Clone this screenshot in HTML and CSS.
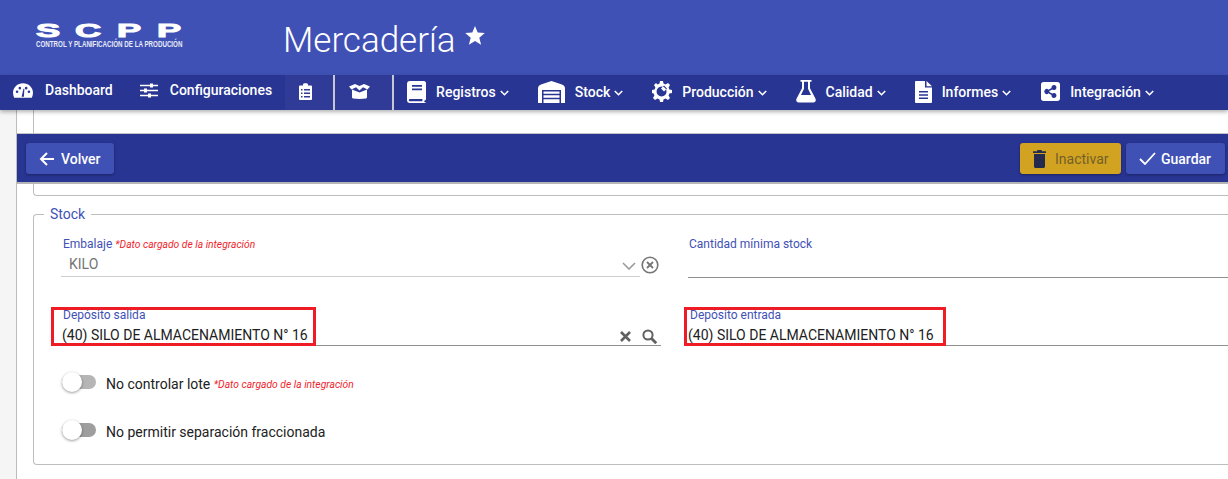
FILE: index.html
```html
<!DOCTYPE html>
<html lang="es">
<head>
<meta charset="utf-8">
<title>Mercadería</title>
<link rel="stylesheet" href="styles.css">
</head>
<body>
<header class="top">
  <div class="logo">
    <div class="logo-mark"><span>S</span><span>C</span><span>P</span><span>P</span></div>
    <div class="logo-sub">CONTROL Y PLANIFICACIÓN DE LA PRODUCIÓN</div>
  </div>
  <h1 class="title">Mercadería</h1>
  <svg class="star" width="20" height="19" viewBox="0 0 20 19"><path fill="#fff" d="M10 0l2.700 6.600 7.100.5-5.500 4.600 1.800 7L10 14.900l-6.100 3.800 1.800-7L.2 7.100l7.100-.5z"/></svg>
</header>
<nav class="nav">
  <a class="item dash"><svg class="i" width="20" height="15" viewBox="0 0 22 16"><path fill="#fff" fill-rule="evenodd" d="M11 0C5 0 0 4.500 0 10.500c0 2 .5 3.800 1.300 5.500h19.400c.8-1.700 1.300-3.500 1.300-5.500C22 4.500 17 0 11 0zM9.500 15l2-9h1l-.5 9zM4.500 8a1.400 1.400 0 1 1 0 2.800 1.400 1.400 0 0 1 0-2.800zm3-4a1.400 1.400 0 1 1 0 2.800 1.400 1.400 0 0 1 0-2.800zm7 0a1.400 1.400 0 1 1 0 2.800 1.400 1.400 0 0 1 0-2.800zm3 4a1.400 1.400 0 1 1 0 2.800 1.400 1.400 0 0 1 0-2.800z"/></svg>Dashboard</a>
  <a class="item conf"><svg class="i" width="18" height="15" viewBox="0 0 18 15"><path fill="none" stroke="#fff" stroke-width="1.700" d="M0 2.500h18M0 7.500h18M0 12.500h18"/><path fill="#fff" d="M10 .5h3v4h-3zM4 5.500h3v4H4zM8 10.500h3v4H8z"/></svg>Configuraciones</a>
  <a class="tab first"><svg width="13" height="17" viewBox="0 0 13 17"><path fill="#fff" fill-rule="evenodd" d="M1 2.500h3V1.500C4 .8 5 .3 6.500.3S9 .8 9 1.500v1h3c.5 0 1 .5 1 1V16c0 .5-.5 1-1 1H1c-.5 0-1-.5-1-1V3.500c0-.5.5-1 1-1zM2 6v1.500h1.500V6zm3 0v1.500h6V6zM2 9.500V11h1.500V9.500zm3 0V11h6V9.500zM2 13v1.500h1.500V13zm3 0v1.500h6V13z"/></svg></a>
  <a class="tab second"><svg width="21" height="15" viewBox="0 0 21 15"><path fill="#fff" d="M3 5.500l7.500 3 7.500-3V13c0 .8-.5 1.200-1 1.400L10.500 15l-6.500-.6c-.6-.2-1-.6-1-1.400zM0 2.500L6 0l4.500 2L15 0l6 2.500-2.500 3L14 3.300l-3.500 3.200L7 3.300 2.500 5.500z"/></svg></a>
  <a class="item reg"><svg class="i" width="19" height="22" viewBox="0 0 19 22"><path fill="#fff" fill-rule="evenodd" d="M3 0h14c1 0 2 1 2 2v16c0 .8-.6 1.400-1.500 1.500-.3.600-.3 1.200 0 1.800.8 0 1.500.2 1.500.7H3c-2 0-3-1.200-3-3V3c0-2 1-3 3-3zM5 4v1.800h10V4zm0 3.500v1.800h10V7.500zM3.300 18c-1 0-1.500.5-1.500 1.200s.5 1.100 1.500 1.100H15.500c-.2-.8-.2-1.500 0-2.300z"/></svg>Registros<svg class="chev" width="9" height="6" viewBox="0 0 9 6"><path fill="none" stroke="#fff" stroke-width="1.600" d="M.8 1l3.700 3.700L8.200 1"/></svg></a>
  <a class="item stk"><svg class="i" width="27" height="22" viewBox="0 0 27 22"><path fill="#fff" fill-rule="evenodd" d="M13.500 0L24 3.500c2 .8 3 2 3 4V22h-4V9H4v13H0V7.500c0-2 1-3.200 3-4zM5.500 10.500h16v2.300h-16zm0 3.800h16v2.400h-16zm0 4h16V22h-16z"/></svg>Stock<svg class="chev" width="9" height="6" viewBox="0 0 9 6"><path fill="none" stroke="#fff" stroke-width="1.600" d="M.8 1l3.700 3.700L8.200 1"/></svg></a>
  <a class="item prod"><svg class="i" width="20" height="21" viewBox="0 0 20 21"><path fill="#fff" fill-rule="evenodd" d="M8 0h3l.5 2.600 2 .8L16 2l2 2-1.400 2.500.8 2L20 9v3l-2.600.5-.8 2L18 17l-2 2-2.500-1.400-2 .8L11 21H8l-.5-2.600-2-.8L3 19l-2-2 1.400-2.500-.8-2L0 12V9l2.600-.5.8-2L2 4l2-2 1.500 1.400 2-.8zM9.500 5.500a5 5 0 1 0 .1 10 5 5 0 0 0-.1-10zM12 4.500l3 3-3 3-3-3z"/></svg>Producción<svg class="chev" width="9" height="6" viewBox="0 0 9 6"><path fill="none" stroke="#fff" stroke-width="1.600" d="M.8 1l3.700 3.700L8.200 1"/></svg></a>
  <a class="item cal"><svg class="i" width="20" height="23" viewBox="0 0 20 23"><path fill="#fff" fill-rule="evenodd" d="M4.500 0h11v1.800H14v6.500l5.500 10.500c.8 1.800-.2 3.700-2.200 3.700H2.700C.7 22.500-.3 20.600.5 18.800L6 8.300V1.800H4.500zM8 1.800v7L5 15h10l-3-6.200v-7z"/></svg>Calidad<svg class="chev" width="9" height="6" viewBox="0 0 9 6"><path fill="none" stroke="#fff" stroke-width="1.600" d="M.8 1l3.700 3.700L8.200 1"/></svg></a>
  <a class="item inf"><svg class="i" width="17" height="22" viewBox="0 0 17 22"><path fill="#fff" fill-rule="evenodd" d="M1 0h9v6.500h7V21c0 .5-.5 1-1 1H1c-.5 0-1-.5-1-1V1c0-.5.5-1 1-1zm10.500 0L17 5.200h-5.500zM4 10v1.500h9V10zm0 3.200v1.500h9v-1.500zm0 3.200v1.500h9v-1.500z"/></svg>Informes<svg class="chev" width="9" height="6" viewBox="0 0 9 6"><path fill="none" stroke="#fff" stroke-width="1.600" d="M.8 1l3.700 3.700L8.200 1"/></svg></a>
  <a class="item int"><svg class="i" width="19" height="19" viewBox="0 0 19 19"><path fill="#fff" fill-rule="evenodd" d="M2.500 0h14C18 0 19 1 19 2.500v14c0 1.500-1 2.500-2.500 2.500h-14C1 19 0 18 0 16.500v-14C0 1 1 0 2.500 0zM13 3a2.500 2.500 0 0 0-2.500 3l-3 1.700a2.500 2.500 0 1 0 0 3.600l3 1.700a2.500 2.500 0 1 0 .8-1.400l-3-1.700a2.500 2.500 0 0 0 0-.8l3-1.700A2.500 2.500 0 1 0 13 3z"/></svg>Integración<svg class="chev" width="9" height="6" viewBox="0 0 9 6"><path fill="none" stroke="#fff" stroke-width="1.600" d="M.8 1l3.700 3.700L8.200 1"/></svg></a>
</nav>
<main class="page">
  <div class="sheet">
    <div class="spacer"></div>
    <div class="toolbar">
      <button class="btn back"><svg width="16" height="14" viewBox="0 0 16 14"><path fill="none" stroke="#fff" stroke-width="2" d="M15 7H2M8 1L2 7l6 6"/></svg>Volver</button>
      <div class="actions">
        <button class="btn inactive"><svg width="13" height="18" viewBox="0 0 13 18"><path fill="#232a4d" d="M4.500 0h4l.5 1.300h4V3H0V1.300h4zM1 4h11v12.500c0 .8-.7 1.500-1.500 1.500h-8C1.700 18 1 17.300 1 16.500z"/></svg>Inactivar</button>
        <button class="btn save"><svg width="17" height="13" viewBox="0 0 17 13"><path fill="none" stroke="#fff" stroke-width="1.800" d="M1 7l5 5L16 1"/></svg>Guardar</button>
      </div>
    </div>
    <div class="prev-end"></div>
    <fieldset class="group">
      <legend>Stock</legend>
      <div class="grid">
        <div class="field with-clear">
          <div class="control muted">
            <label>Embalaje <em>*Dato cargado de la integración</em></label>
            <div class="value grey">KILO<svg class="sel" width="14" height="8" viewBox="0 0 14 8"><path fill="none" stroke="#9a9a9a" stroke-width="1.600" d="M1 1l6 6 6-6"/></svg></div>
          </div>
          <svg class="clear" width="18" height="18" viewBox="0 0 18 18"><circle cx="9" cy="9" r="7.800" fill="none" stroke="#757575" stroke-width="1.600"/><path stroke="#757575" stroke-width="1.800" d="M6 6l6 6M12 6l-6 6"/></svg>
        </div>
        <div class="field plain">
          <div class="control dark">
            <label>Cantidad mínima stock</label>
            <div class="value tall"></div>
          </div>
        </div>
        <div class="field boxed">
          <div class="control dark">
            <label>Depósito salida</label>
            <div class="value">(40) SILO DE ALMACENAMIENTO N° 16
              <span class="tools"><svg width="11" height="11" viewBox="0 0 11 11"><path stroke="#616161" stroke-width="2.600" d="M1 1l9 9M10 1l-9 9"/></svg><svg width="15" height="15" viewBox="0 0 15 15"><circle cx="6" cy="6" r="4.600" fill="none" stroke="#616161" stroke-width="2"/><path stroke="#616161" stroke-width="2.800" d="M9.500 9.500l4.700 4.700"/></svg></span>
            </div>
          </div>
          <span class="mark"></span>
        </div>
        <div class="field boxed right">
          <div class="control dark">
            <label>Depósito entrada</label>
            <div class="value">(40) SILO DE ALMACENAMIENTO N° 16</div>
          </div>
          <span class="mark"></span>
        </div>
      </div>
      <div class="toggle first-toggle"><span class="track light"><span class="knob"></span></span>No controlar lote <em>*Dato cargado de la integración</em></div>
      <div class="toggle"><span class="track"><span class="knob"></span></span>No permitir separación fraccionada</div>
    </fieldset>
  </div>
</main>
</body>
</html>
```
FILE: styles.css
```css
* { box-sizing: border-box; }
html, body { margin: 0; height: 479px; overflow: hidden; }
body { font-family: Roboto, "Liberation Sans", sans-serif; background: #f5f5f5; color: #212121; }
.top { height: 75px; background: #3f51b5; display: flex; color: #fff; }
.logo { margin: 24px 0 0 36px; width: 147px; }
.logo-mark { display: flex; justify-content: space-between; width: 145px; height: 14px; font: 700 19px/14px "Liberation Sans", sans-serif; -webkit-text-stroke: 1px #fff; }
.logo-mark span { width: 24px; display: block; text-align: center; transform: scaleX(1.9); }
.logo-sub { font: 700 9px/9px "Liberation Sans", sans-serif; white-space: nowrap; margin-top: 2px; color: #e8eaf6; transform: scaleX(.69); transform-origin: left center; }
.title { margin: 19px 0 0 100px; font-size: 35px; line-height: 44px; font-weight: 300; white-space: nowrap; }
.star { margin: 26px 0 0 9px; flex: none; }
.nav { height: 35px; background: #283593; display: flex; align-items: center; color: #fff; font-size: 14px; font-weight: 500; box-shadow: 0 2px 4px rgba(0,0,0,.3); position: relative; }
.item { display: flex; align-items: center; white-space: nowrap; margin-bottom: 2px; }
.i { flex: none; margin-right: 10px; }
.chev { margin-left: 4px; margin-top: 2px; }
.dash { margin-left: 13px; margin-bottom: 5px; }
.dash .i { margin-right: 12px; }
.conf { margin-left: 27px; margin-bottom: 5px; }
.conf .i { margin-right: 12px; }
.tab { align-self: stretch; display: flex; align-items: center; padding: 0 0 2px 14px; background: #303a97; border-right: 2px solid #c5c7d5; }
.tab.first { margin-left: 13px; width: 50px; }
.tab.second { width: 59px; }
.reg { margin-left: 13px; }
.stk { margin-left: 29px; }
.prod { margin-left: 29px; }
.cal { margin-left: 29px; }
.inf { margin-left: 29px; }
.int { margin-left: 30px; }
.page { padding-left: 16px; }
.sheet { background: #fff; height: 369px; border-left: 1px solid #bdbdbd; }
.spacer { height: 23px; margin-left: 16px; border-left: 1px solid #bdbdbd; }
.toolbar { height: 51px; background: #283593; border-top: 1px solid #c4c4c4; border-bottom: 2px solid #b5b5b5; padding: 9px 3px 0 9px; display: flex; justify-content: space-between; align-items: flex-start; }
.prev-end { height: 12px; margin-left: 16px; border-left: 1px solid #bdbdbd; border-bottom: 1px solid #bdbdbd; border-radius: 0 0 0 4px; }
.btn { height: 31px; border: 0; border-radius: 3px; display: flex; align-items: center; font: 500 14px Roboto, sans-serif; color: #fff; background: #3f51b5; box-shadow: 0 1px 3px rgba(0,0,0,.35); padding: 0; }
.back { width: 88px; padding-left: 13px; gap: 6px; }
.actions { display: flex; gap: 5px; }
.inactive { width: 101px; background: #d2a321; color: #72602a; font-weight: 400; padding-left: 13px; gap: 9px; }
.save { width: 99px; padding-left: 13px; gap: 5px; }
.group { margin: 10px 0 0 16px; height: 259px; border: 1px solid #bdbdbd; border-right: 0; border-radius: 4px 0 0 4px; padding: 0 0 0 27px; min-width: 0; }
.group legend { padding: 0 6px; margin-left: -17px; color: #3f51b5; font-size: 14px; line-height: 16px; }
.grid { display: grid; grid-template-columns: 600px 1fr; column-gap: 27px; row-gap: 30px; margin-top: 15px; }
.field { position: relative; }
.with-clear { display: flex; }
.control { flex: 1; }
.control label { display: block; font-size: 12px; line-height: 14px; color: #3f51b5; padding-left: 2px; height: 16px; white-space: nowrap; }
.plain .control label { padding-left: 1px; }
em { color: #f01e2c; font-size: 10.3px; font-style: italic; }
.value { height: 22px; border-bottom: 1px solid #8f8f8f; font-size: 14px; line-height: 22px; white-space: nowrap; position: relative; }
.value.tall { height: 25px; }
.boxed .value { padding-left: 1px; }
.right .value { padding-left: 0; }
.control.muted .value { height: 24px; border-bottom-color: #cfcfcf; color: #757575; padding-left: 8px; }
.sel { position: absolute; right: 4px; top: 9px; }
.clear { margin: 19px 2px 0 1px; flex: none; }
.tools { position: absolute; right: 4px; top: 5px; display: flex; gap: 11px; align-items: center; }
.mark { position: absolute; left: -10px; top: -1px; width: 265px; height: 39px; border: 3px solid #ee1c25; }
.right .mark { left: -4px; width: 262px; }
.toggle { display: flex; align-items: center; font-size: 14px; margin-top: 24px; height: 24px; white-space: pre; }
.first-toggle { margin-top: 26px; }
.track { width: 34px; height: 14px; border-radius: 7px; background: #9e9e9e; position: relative; margin: -4px 10px 0 1px; }
.track.light { background: #b5b5b5; }
.knob { position: absolute; left: 0; top: -3px; width: 20px; height: 20px; border-radius: 50%; background: #fff; box-shadow: 0 1px 3px rgba(0,0,0,.4); }
```
